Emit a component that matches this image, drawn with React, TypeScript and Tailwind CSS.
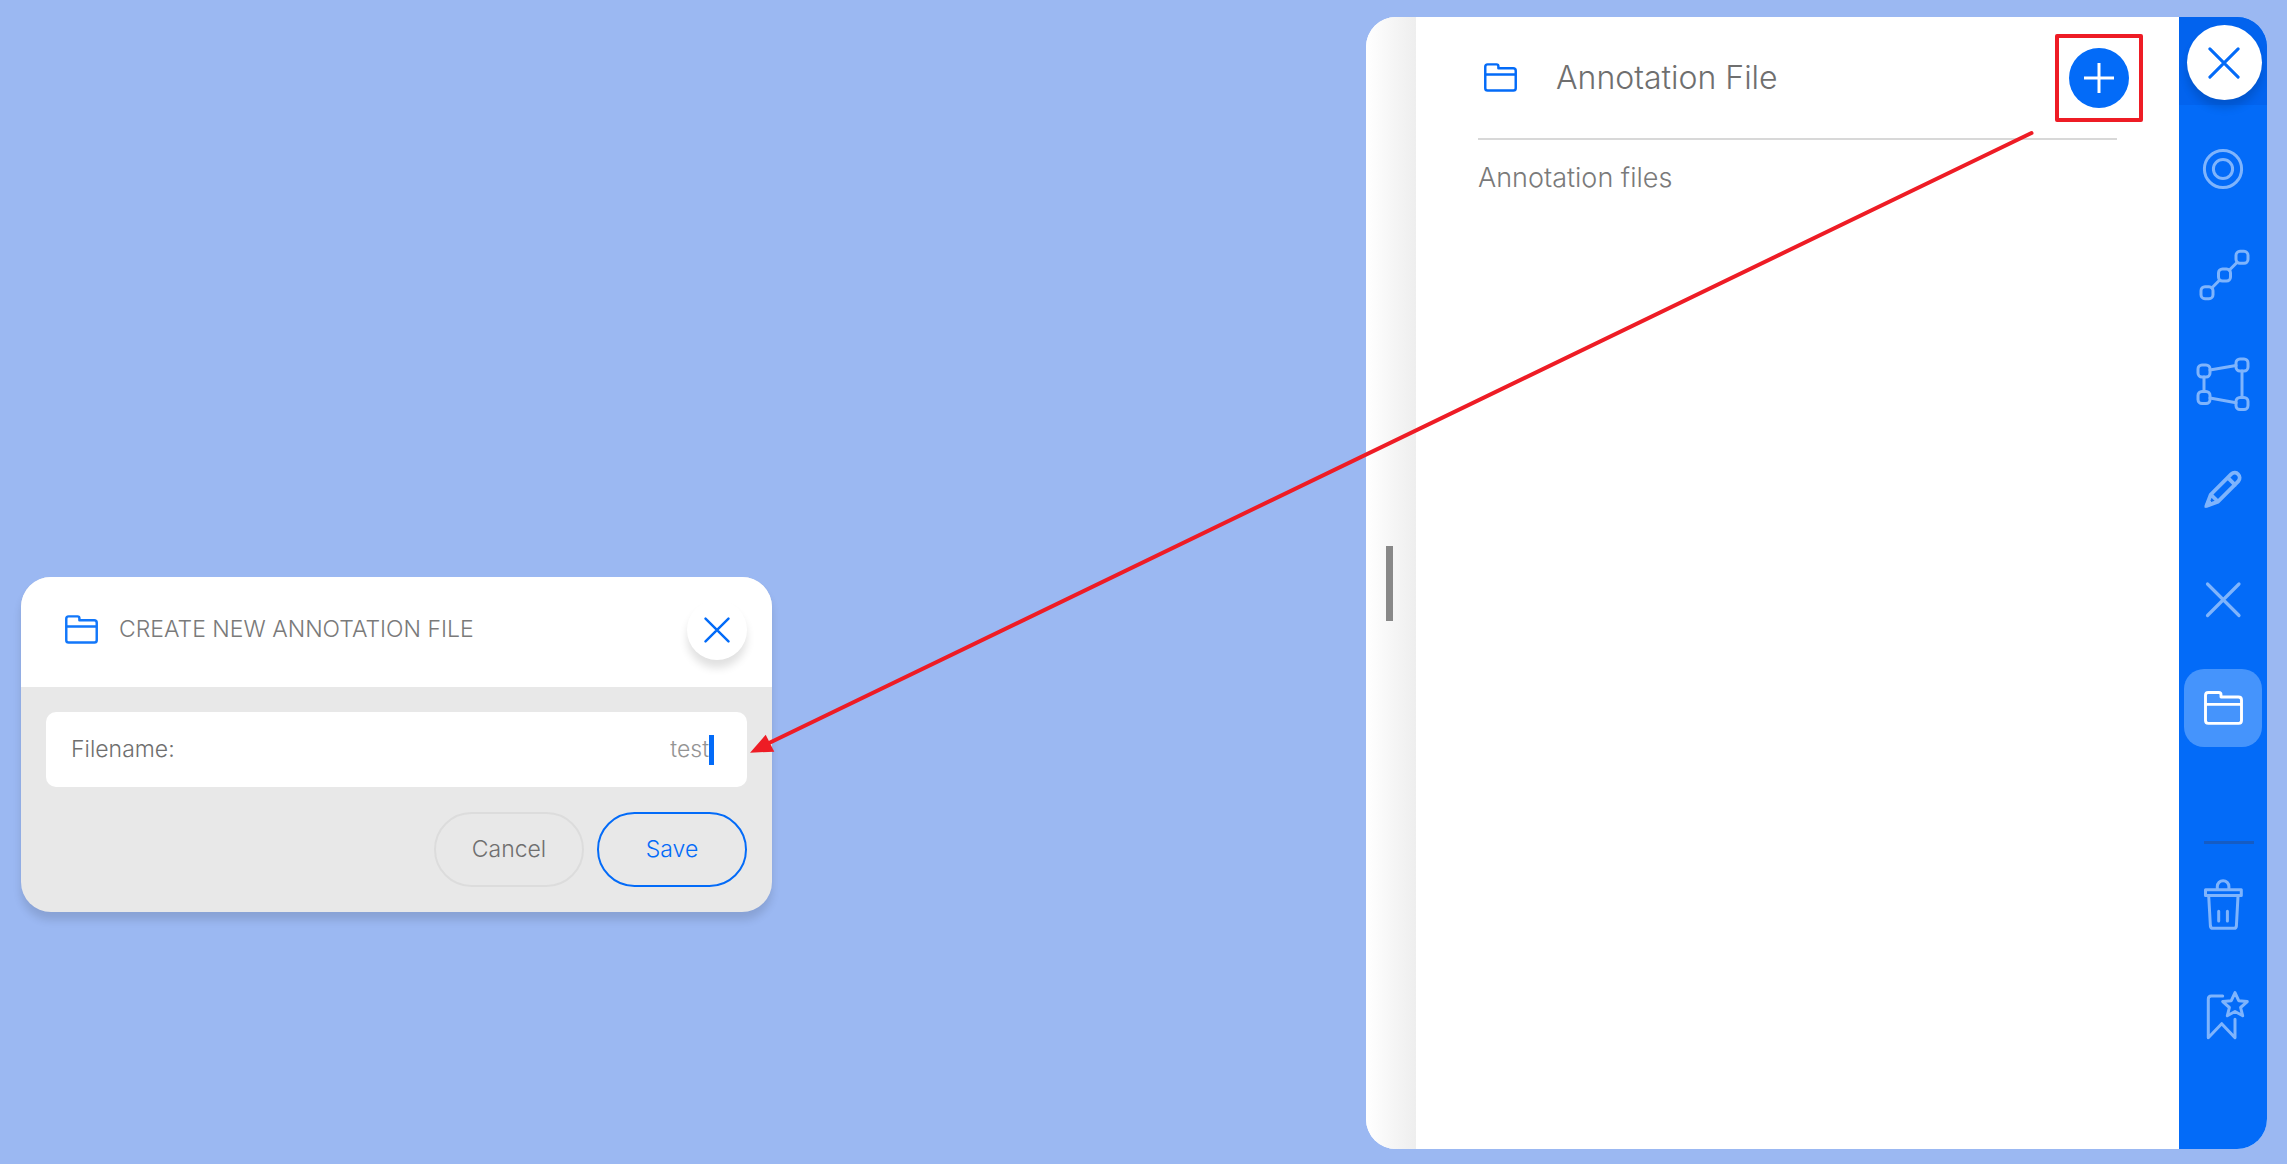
import React, { useState } from "react";

function FolderIcon({ className }: { className?: string }) {
  return (
    <svg viewBox="0 0 39 34" className={className} fill="none" stroke="currentColor" strokeWidth="2.9" strokeLinejoin="round" aria-hidden="true">
      <path d="M1.5 4.3Q1.5 1.5 4.3 1.5H14.8Q17 1.5 17 3.7V6H34.4Q37.5 6 37.5 9V29.6Q37.5 32.4 34.7 32.4H4.3Q1.5 32.4 1.5 29.6ZM1.5 13.4H37.5" />
    </svg>
  );
}

function CrossIcon({ className }: { className?: string }) {
  return (
    <svg viewBox="0 0 34 34" className={className} fill="none" stroke="currentColor" strokeWidth="3.2" strokeLinecap="round" aria-hidden="true">
      <path d="M2 2L32 32M32 2L2 32" />
    </svg>
  );
}

function ToolIcon({ children }: { children: React.ReactNode }) {
  return (
    <svg viewBox="0 0 78 78" className="size-full" fill="none" stroke="currentColor" strokeWidth="3" strokeLinecap="round" strokeLinejoin="round" aria-hidden="true">
      {children}
    </svg>
  );
}

function Node({ x, y }: { x: number; y: number }) {
  return <rect x={x - 6} y={y - 6} width="12" height="12" rx="4" />;
}

const tools = [
  {
    label: "Point",
    icon: (
      <ToolIcon>
        <circle cx="39" cy="40" r="18.6" />
        <circle cx="39" cy="40" r="9.6" />
      </ToolIcon>
    ),
  },
  {
    label: "Line",
    icon: (
      <ToolIcon>
        <Node x={58} y={20.3} />
        <Node x={40.5} y={38} />
        <Node x={23} y={55.7} />
        <path d="M53.2 25.2L45.2 33.2M35.7 43L27.8 51" />
      </ToolIcon>
    ),
  },
  {
    label: "Polygon",
    icon: (
      <ToolIcon>
        <Node x={20} y={26} />
        <Node x={58} y={20} />
        <Node x={58} y={58.5} />
        <Node x={20} y={52.5} />
        <path d="M26 25L52 20.5M58 26V52.5M52 57.7L26 53M20 32V46.5" />
      </ToolIcon>
    ),
  },
  {
    label: "Draw",
    icon: (
      <ToolIcon>
        <path strokeWidth="3.8" d="M22.400 52.900L26.800 41.500L47.200 21.200C52 16.800 58.600 23.400 54.200 28.400L34 48.600ZM26.800 41.500L34 48.600M43.800 24.600L51 31.800" />
        <path fill="currentColor" strokeWidth="1" d="M21 54L24 46L29 51Z" />
      </ToolIcon>
    ),
  },
  {
    label: "Cancel drawing",
    icon: (
      <ToolIcon>
        <path strokeWidth="3.2" d="M23.500 23L55 54.500M55 23L23.500 54.500" />
      </ToolIcon>
    ),
  },
];

export default function App() {
  const [name, setName] = useState("test");

  return (
    <main className="relative grid min-h-screen grid-cols-[751fr_594fr_901fr] bg-[#9bb8f2] pt-[17px] pr-5 pb-[15px] pl-[21px] font-['Inter',sans-serif] font-light text-[#6f6f6f]">
      <form className="mt-[560px] self-start overflow-hidden rounded-[30px] bg-[#e8e8e8] shadow-[0_8px_8px_rgba(0,0,0,0.12)]" onSubmit={(e) => e.preventDefault()}>
        <header className="flex h-[110px] items-center bg-white pr-[25px] pb-[5px] pl-[44px]">
          <FolderIcon className="h-[29px] w-[33px] text-[#1277fa]" />
          <h2 className="ml-[21px] flex-1 text-[23px] text-[#7a7a7a]">CREATE NEW ANNOTATION FILE</h2>
          <button type="button" aria-label="Close" className="flex size-[60px] items-center justify-center rounded-full bg-white text-[#036bf8] shadow-[0_8px_8px_rgba(0,0,0,0.12)]">
            <CrossIcon className="size-[26px]" />
          </button>
        </header>
        <div className="p-[25px]">
          <label className="flex h-[75px] items-center rounded-[10px] bg-white pr-[33px] pl-[25px] text-[23px]">
            <span>Filename:</span>
            <input value={name} onChange={(e) => setName(e.target.value)} className="min-w-0 flex-1 text-right text-[#949494] outline-none" />
            <span className="h-[30px] w-[5px] bg-[#036bf8]" />
          </label>
          <div className="mt-[25px] flex justify-end gap-[13px] text-[23px]">
            <button type="button" className="h-[75px] w-[150px] rounded-full border-2 border-[#dcdcdc]">Cancel</button>
            <button type="submit" className="h-[75px] w-[150px] rounded-full border-2 border-[#036bf8] text-[#036bf8]">Save</button>
          </div>
        </div>
      </form>

      <aside className="col-start-3 flex overflow-hidden rounded-[30px] bg-white">
        <div className="flex w-[50px] items-center bg-linear-to-r from-white to-[#eeeeee] pl-5">
          <div className="h-[75px] w-[7px] bg-[#888]" />
        </div>
        <section className="flex-1 px-[62px]">
          <header className="flex h-[123px] items-center border-b-2 border-[#d8d8d8] pl-[6px]">
            <FolderIcon className="h-[29px] w-[33px] text-[#036bf8]" />
            <h1 className="ml-[39px] flex-1 text-[32px]">Annotation File</h1>
            <div className="relative -mr-3">
              <button type="button" aria-label="Add annotation file" className="flex size-[60px] items-center justify-center rounded-full bg-[#036bf8] text-white">
                <svg viewBox="0 0 30 30" className="size-[30px]" stroke="currentColor" strokeWidth="3" aria-hidden="true">
                  <path d="M15 0V30M0 15H30" />
                </svg>
              </button>
              <div className="pointer-events-none absolute -inset-[14px] rounded-xs border-4 border-[#ee1c25]" />
            </div>
          </header>
          <h2 className="mt-[18px] text-[27px] text-[#7a7a7a]">Annotation files</h2>
        </section>
        <nav className="flex w-[88px] flex-col items-center bg-[#036bf8] text-[#7fb4fc]">
          <div className="flex h-[88px] w-full items-center justify-center bg-[#0263ee] pt-[3px] pl-[2px]">
            <button type="button" aria-label="Close panel" className="flex size-[75px] items-center justify-center rounded-full bg-white text-[#036bf8] shadow-[0_8px_8px_rgba(0,0,0,0.14)]">
              <CrossIcon className="size-8" />
            </button>
          </div>
          <div className="mt-6 flex flex-col gap-[30px]">
            {tools.map((tool) => (
              <button key={tool.label} type="button" aria-label={tool.label} className="size-[78px]">
                {tool.icon}
              </button>
            ))}
            <button type="button" aria-label="Annotation files" className="flex size-[78px] items-center justify-center rounded-[20px] bg-[#4594fc] text-white">
              <FolderIcon className="h-[34px] w-[39px]" />
            </button>
          </div>
          <hr className="mt-[94px] ml-3 h-[3px] w-[50px] border-0 bg-[#155cc4]" />
          <div className="mt-[22px] flex flex-col gap-8">
            <button type="button" aria-label="Delete" className="size-[78px]">
              <ToolIcon>
                <path d="M21.5 23.7H57.3V29.5H21.5ZM33.3 23V20.5A5.8 5.8 0 0 1 44.9 20.5V23M24.7 30L26.4 60Q26.6 62.3 29 62.3H50Q52.2 62.3 52.4 60L54 30M34.7 45.3V55M43.4 45.3V55" />
              </ToolIcon>
            </button>
            <button type="button" aria-label="Bookmarks" className="size-[78px]">
              <ToolIcon>
                <path d="M38.7 20H27.3Q24.3 20 24.3 23V61.7L37.7 47.7L51 61.7V43.3" />
                <path d="M51 16.6L54.7 24.7L63.3 25.6L56.6 31.5L58.7 39.8L51 35.5L43.3 39.8L45.4 31.5L38.7 25.6L47.3 24.7Z" />
              </ToolIcon>
            </button>
          </div>
        </nav>
      </aside>

      <svg viewBox="0 0 2287 1164" className="pointer-events-none absolute inset-0 size-full" aria-hidden="true">
        <path d="M2031.500 133L768 743.500" stroke="#ee1c25" strokeWidth="4" strokeLinecap="round" />
        <path d="M750 752.700L765.700 734.700L774.300 751.700Z" fill="#ee1c25" />
      </svg>
    </main>
  );
}
